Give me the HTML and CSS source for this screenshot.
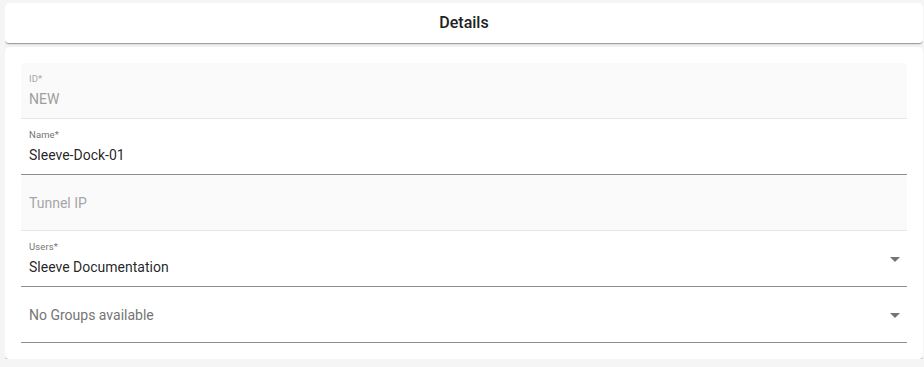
FILE: index.html
```html
<!DOCTYPE html>
<html>
<head>
<meta charset="utf-8">
<link rel="stylesheet" href="styles.css">
</head>
<body>
<div class="page">
  <div class="card header">
    <h1 class="title">Details</h1>
  </div>
  <div class="card form">
    <div class="field filled disabled">
      <div class="content">
        <div class="label">ID*</div>
        <div class="value">NEW</div>
      </div>
    </div>
    <div class="field">
      <div class="content">
        <div class="label">Name*</div>
        <div class="value">Sleeve-Dock-01</div>
      </div>
    </div>
    <div class="field filled disabled empty">
      <div class="content">
        <div class="placeholder">Tunnel IP</div>
      </div>
    </div>
    <div class="field select">
      <div class="content">
        <div class="label">Users*</div>
        <div class="value">Sleeve Documentation</div>
      </div>
      <svg class="arrow" viewBox="0 0 24 24" width="24" height="24"><path d="M7 10l5 5 5-5z"/></svg>
    </div>
    <div class="field select empty">
      <div class="content">
        <div class="placeholder dark">No Groups available</div>
      </div>
      <svg class="arrow" viewBox="0 0 24 24" width="24" height="24"><path d="M7 10l5 5 5-5z"/></svg>
    </div>
  </div>
</div>
</body>
</html>
```
FILE: styles.css
```css
html, body {
  background: #f5f5f5;
}
body {
  margin: 3px 1px 0 5px;
  font-family: Roboto, "Liberation Sans", Arial, sans-serif;
  color: rgba(0,0,0,0.87);
}
.page {
  display: flex;
  flex-direction: column;
  gap: 4px;
}
.card {
  background: #fff;
  border-radius: 4px;
  box-shadow: 0 2px 1px -1px rgba(0,0,0,0.2), 0 1px 1px 0 rgba(0,0,0,0.14), 0 1px 3px 0 rgba(0,0,0,0.12);
}
.header {
  height: 40px;
  display: flex;
  align-items: center;
  justify-content: center;
}
.title {
  margin: 0;
  font-size: 16px;
  font-weight: 500;
  color: #212121;
  line-height: 20px;
}
.form {
  padding: 16px;
  display: flex;
  flex-direction: column;
}
.field {
  height: 55px;
  border-bottom: 1px solid #8c8c8c;
  display: flex;
  align-items: center;
  padding: 0 0 0 8px;
  box-sizing: content-box;
}
.field.filled {
  background: #fafafa;
  border-radius: 4px 4px 0 0;
  border-bottom: 1px solid #e6e6e6;
}
.content {
  flex: 1;
  display: flex;
  flex-direction: column;
  padding: 10px 0 9px;
}
.label {
  font-size: 9.5px;
  line-height: 11px;
  color: #757575;
  letter-spacing: 0.1px;
}
.value {
  margin-top: 6px;
  font-size: 14px;
  line-height: 19px;
  color: rgba(0,0,0,0.87);
}
.disabled .label {
  color: #a8a8a8;
}
.disabled .value {
  color: #9e9e9e;
}
.placeholder {
  font-size: 14px;
  line-height: 19px;
  color: #a6a6a6;
}
.placeholder.dark {
  color: #757575;
}
.arrow {
  flex: none;
  fill: #757575;
}
```
